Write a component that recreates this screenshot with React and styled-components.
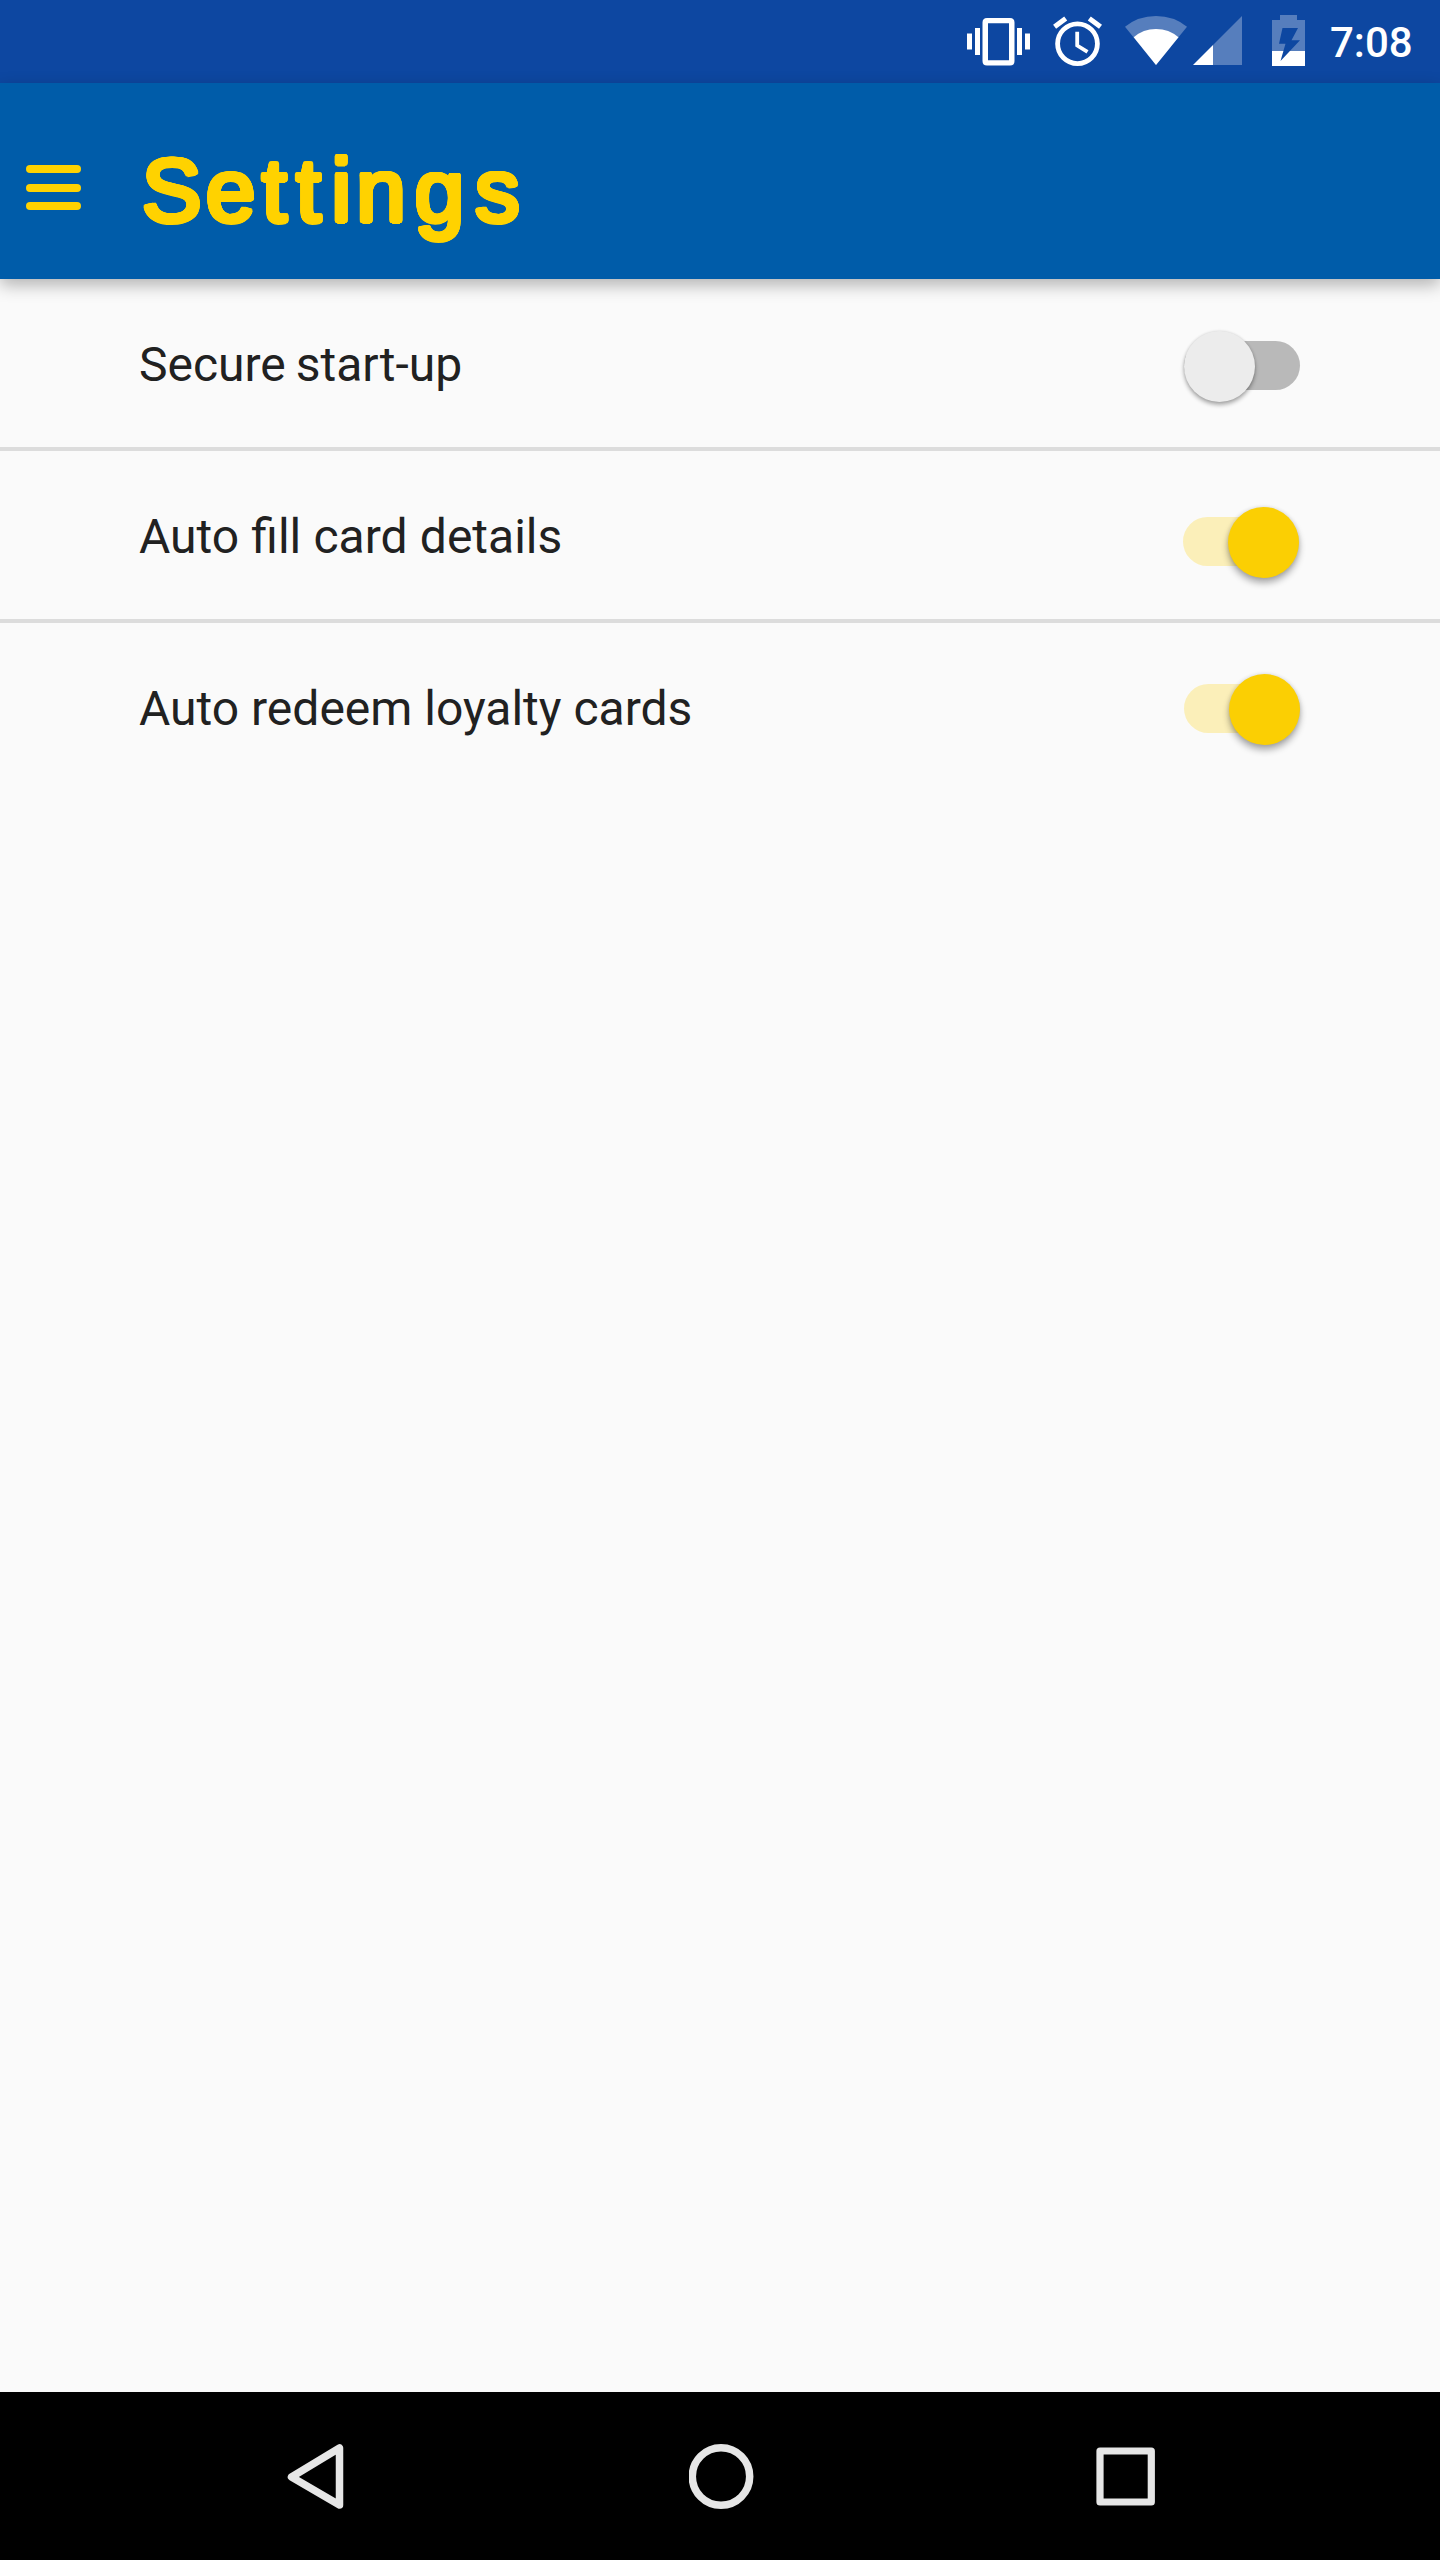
import React from "react";
import styled, { createGlobalStyle } from "styled-components";

const GlobalStyle = createGlobalStyle`
  html, body { margin: 0; padding: 0; background: #fafafa; }
  * { box-sizing: border-box; }
`;

const Screen = styled.div`
  display: flex;
  flex-direction: column;
  width: 1440px;
  height: 2560px;
  overflow: hidden;
  background: #fafafa;
  color: #212121;
  font-family: Roboto, "Liberation Sans", sans-serif;
`;

const StatusBar = styled.div`
  display: flex;
  flex: none;
  justify-content: flex-end;
  height: 83px;
  padding-right: 27px;
  background: #0d47a1;
`;

const StatusIcon = styled.svg`
  display: block;
  flex: none;
  height: 83px;
  width: ${(p) => p.$width}px;
  margin-right: ${(p) => p.$gap}px;
`;

const Clock = styled.time`
  width: 83px;
  padding-top: 18px;
  font-size: 42px;
  font-weight: 500;
  line-height: 50px;
  white-space: nowrap;
  color: #fff;
`;

const AppBar = styled.header`
  display: flex;
  flex: none;
  height: 196px;
  padding-left: 26px;
  background: #005ca9;
  box-shadow: 0 6px 16px rgba(0, 0, 0, 0.29);
`;

const MenuButton = styled.button`
  display: flex;
  flex-direction: column;
  gap: 10.5px;
  width: 55px;
  margin: 82px 0 0;
  padding: 0;
  border: 0;
  background: none;
`;

const MenuLine = styled.span`
  height: 8px;
  border-radius: 4px;
  background: #ffd200;
`;

/* A ring of offset shadows thickens the letters and rounds their ends. */
const ring = Array.from({ length: 24 }, (_, i) => {
  const a = (i / 24) * Math.PI * 2;
  return `${(Math.cos(a) * 2.5).toFixed(2)}px ${(Math.sin(a) * 2.5).toFixed(2)}px 0 #ffd200`;
}).join(", ");

const Title = styled.h1`
  margin: 56px 0 0 61px;
  font-family: "Arial Rounded MT Bold", "Liberation Sans", Arial, sans-serif;
  font-size: 89px;
  font-weight: 400;
  line-height: 102px;
  white-space: nowrap;
  color: #ffd200;
  text-shadow: ${ring};
`;

const Letter = styled.span`
  letter-spacing: ${(p) => p.$space}px;
`;

const List = styled.main`
  flex: 1;
`;

const Row = styled.label`
  display: flex;
  align-items: flex-start;
  justify-content: space-between;
  height: 172px;
  padding: 0 ${(p) => p.$inset}px 0 139px;
  border-bottom: 4px solid ${(p) => (p.$last ? "transparent" : "#dcdcdc")};
`;

const Label = styled.span`
  padding-top: ${(p) => p.$top}px;
  font-size: 48px;
  line-height: 56px;
  word-spacing: ${(p) => p.$wordSpace}px;
  white-space: nowrap;
`;

const Track = styled.span`
  display: flex;
  align-items: center;
  justify-content: ${(p) => (p.$on ? "flex-end" : "flex-start")};
  width: 116px;
  height: 49px;
  margin-top: ${(p) => p.$top}px;
  border-radius: 25px;
  background: ${(p) => (p.$on ? "#fbefb9" : "#b9b9b9")};
`;

const Thumb = styled.span`
  flex: none;
  width: 71px;
  height: 71px;
  margin-top: ${(p) => (p.$on ? 2 : 1)}px;
  border-radius: 50%;
  background: ${(p) => (p.$on ? "#fbcf03" : "#ececec")};
  box-shadow: ${(p) =>
    p.$on
      ? "0 5px 7px rgba(0,0,0,.32), 0 0 4px rgba(0,0,0,.12)"
      : "0 3px 4px rgba(0,0,0,.32), 0 0 3px rgba(0,0,0,.12)"};
`;

const NavBar = styled.nav`
  display: flex;
  flex: none;
  justify-content: space-between;
  height: 168px;
  padding: 0 280px 0 283px;
  background: #000;
`;

const NavIcon = styled.svg`
  display: block;
  width: ${(p) => p.$width}px;
  height: 168px;
  fill: none;
  stroke: #e6e6e6;
`;

/* Each letter of the title with the space that follows it. */
const titleLetters = [
  ["S", 4.5],
  ["e", 6.5],
  ["t", 9.5],
  ["t", 10.5],
  ["i", 5],
  ["n", 9],
  ["g", 11],
  ["s", 0],
];

const settings = [
  { name: "Secure start-up", on: false, inset: 140, labelTop: 58, wordSpace: -2, trackTop: 62 },
  { name: "Auto fill card details", on: true, inset: 141, labelTop: 58, wordSpace: 0.3, trackTop: 66 },
  { name: "Auto redeem loyalty cards", on: true, inset: 140, labelTop: 58, wordSpace: 0, trackTop: 61, last: true },
];

export default function App() {
  return (
    <>
      <GlobalStyle />
      <Screen>
        <StatusBar>
          <StatusIcon $width={66} $gap={20} viewBox="966 0 66 83" fill="#fff">
            <path d="M967 33.5h5v16h-5zM975 28h5v27h-5zM1017 28h5v27h-5zM1025 33.5h5v16h-5z" />
            <path fillRule="evenodd" d="M987 18h23q4.500 0 4.500 4.500v38.500q0 4.500-4.500 4.500h-23q-4.500 0-4.500-4.500v-38.500q0-4.500 4.500-4.500zM988 23.200v37h21v-37z" />
          </StatusIcon>
          <StatusIcon $width={52} $gap={20} viewBox="1052 0 52 83" fill="none" stroke="#fff">
            <circle cx="1077.500" cy="43.700" r="19.900" strokeWidth="4.800" />
            <path d="M1077.200 31.800V45.500L1087.500 51.800" strokeWidth="3.800" />
            <path d="M1054.600 26.800L1065.700 18.400M1089.300 18.400L1100.500 26.800" strokeWidth="5" />
          </StatusIcon>
          <StatusIcon $width={64} $gap={4} viewBox="1124 0 64 83" fill="#fff">
            <path fillOpacity=".3" d="M1156 65L1125 26.800Q1138 16 1156 16T1187 26.800z" />
            <path d="M1156 65L1133.700 37.300Q1143 29 1156 29T1178.500 37.300z" />
          </StatusIcon>
          <StatusIcon $width={52} $gap={26} viewBox="1192 0 52 83" fill="#fff">
            <path fillOpacity=".3" d="M1213 45L1242 16V65H1213z" />
            <path d="M1193 65L1213 45V65z" />
          </StatusIcon>
          <StatusIcon $width={38} $gap={22} viewBox="1270 0 38 83" fill="#fff">
            <path fillOpacity=".3" d="M1272 51V20h8v-5h17v5h8v31z" />
            <path d="M1272 51h33v15h-33z" />
            <path fill="#0d47a1" d="M1282.500 28H1298L1291.500 40.300H1300L1280.500 61L1285.500 43.700H1279z" />
          </StatusIcon>
          <Clock>7:08</Clock>
        </StatusBar>
        <AppBar>
          <MenuButton aria-label="Menu">
            <MenuLine />
            <MenuLine />
            <MenuLine />
          </MenuButton>
          <Title>
            {titleLetters.map(([letter, space], i) => (
              <Letter key={i} $space={space}>{letter}</Letter>
            ))}
          </Title>
        </AppBar>
        <List>
          {settings.map((s) => (
            <Row key={s.name} $last={s.last} $inset={s.inset}>
              <Label $top={s.labelTop} $wordSpace={s.wordSpace}>{s.name}</Label>
              <Track $on={s.on} $top={s.trackTop}>
                <Thumb $on={s.on} />
              </Track>
            </Row>
          ))}
        </List>
        <NavBar>
          <NavIcon $width={66} viewBox="283 2392 66 168" strokeWidth="7.500" strokeLinejoin="round">
            <path d="M291.500 2477L339.500 2448V2505z" />
          </NavIcon>
          <NavIcon $width={66} viewBox="688.500 2392 66 168" strokeWidth="7.500">
            <circle cx="720.500" cy="2476.500" r="28.700" />
          </NavIcon>
          <NavIcon $width={66} viewBox="1094 2392 66 168" strokeWidth="7.200" strokeLinejoin="round">
            <path d="M1100 2451h51.300v51h-51.300z" />
          </NavIcon>
        </NavBar>
      </Screen>
    </>
  );
}
